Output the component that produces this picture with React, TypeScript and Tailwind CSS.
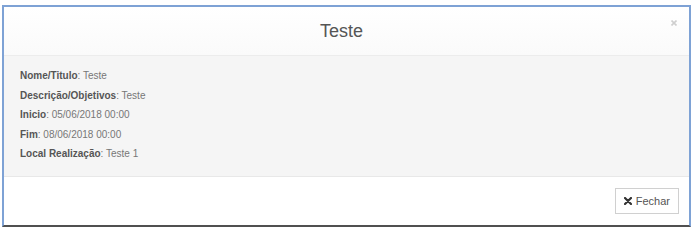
export default function App() {
  const rows: [string, string][] = [
    ["Nome/Titulo", "Teste"],
    ["Descrição/Objetivos", "Teste"],
    ["Inicio", "05/06/2018 00:00"],
    ["Fim", "08/06/2018 00:00"],
    ["Local Realização", "Teste 1"],
  ];

  return (
    <div className="w-[693px] h-[230px] bg-white pt-[5px] px-[2px] font-['Liberation_Sans',Arial,sans-serif]">
      <div className="flex flex-col border-x-2 border-t-2 border-[#7ea2d5] border-b-2 border-b-[#505050] bg-white">
        {/* header */}
        <div className="relative flex h-[49px] items-center justify-center border-b border-[#ececec] bg-gradient-to-b from-white to-[#fafafa] pr-[10px]">
          <span className="text-[18px] text-[#555]">Teste</span>
          <svg className="absolute right-[12px] top-[13px]" width="6" height="6" viewBox="0 0 6 6">
            <path d="M0.5 0.5L5.5 5.5M5.5 0.5L0.5 5.5" stroke="#cfcfcf" strokeWidth="1.6" />
          </svg>
        </div>
        {/* body */}
        <div className="flex flex-col bg-[#f5f5f5] pl-[16px] pt-[10px] pb-[12px] text-[10px] leading-[19.6px] text-[#777]">
          {rows.map(([k, v]) => (
            <div key={k}>
              <span className="font-bold text-[#555]">{k}</span>: {v}
            </div>
          ))}
        </div>
        {/* footer */}
        <div className="flex h-[49px] items-center justify-end border-t border-[#e8e8e8] pr-[10px]">
          <button className="flex h-[26px] items-center gap-[4px] border border-[#d0d0d0] bg-white px-[8px] text-[11px] text-[#555]">
            <svg width="8" height="8" viewBox="0 0 8 8">
              <path d="M1 1L7 7M7 1L1 7" stroke="#333" strokeWidth="2.2" strokeLinecap="round" />
            </svg>
            Fechar
          </button>
        </div>
      </div>
    </div>
  );
}
